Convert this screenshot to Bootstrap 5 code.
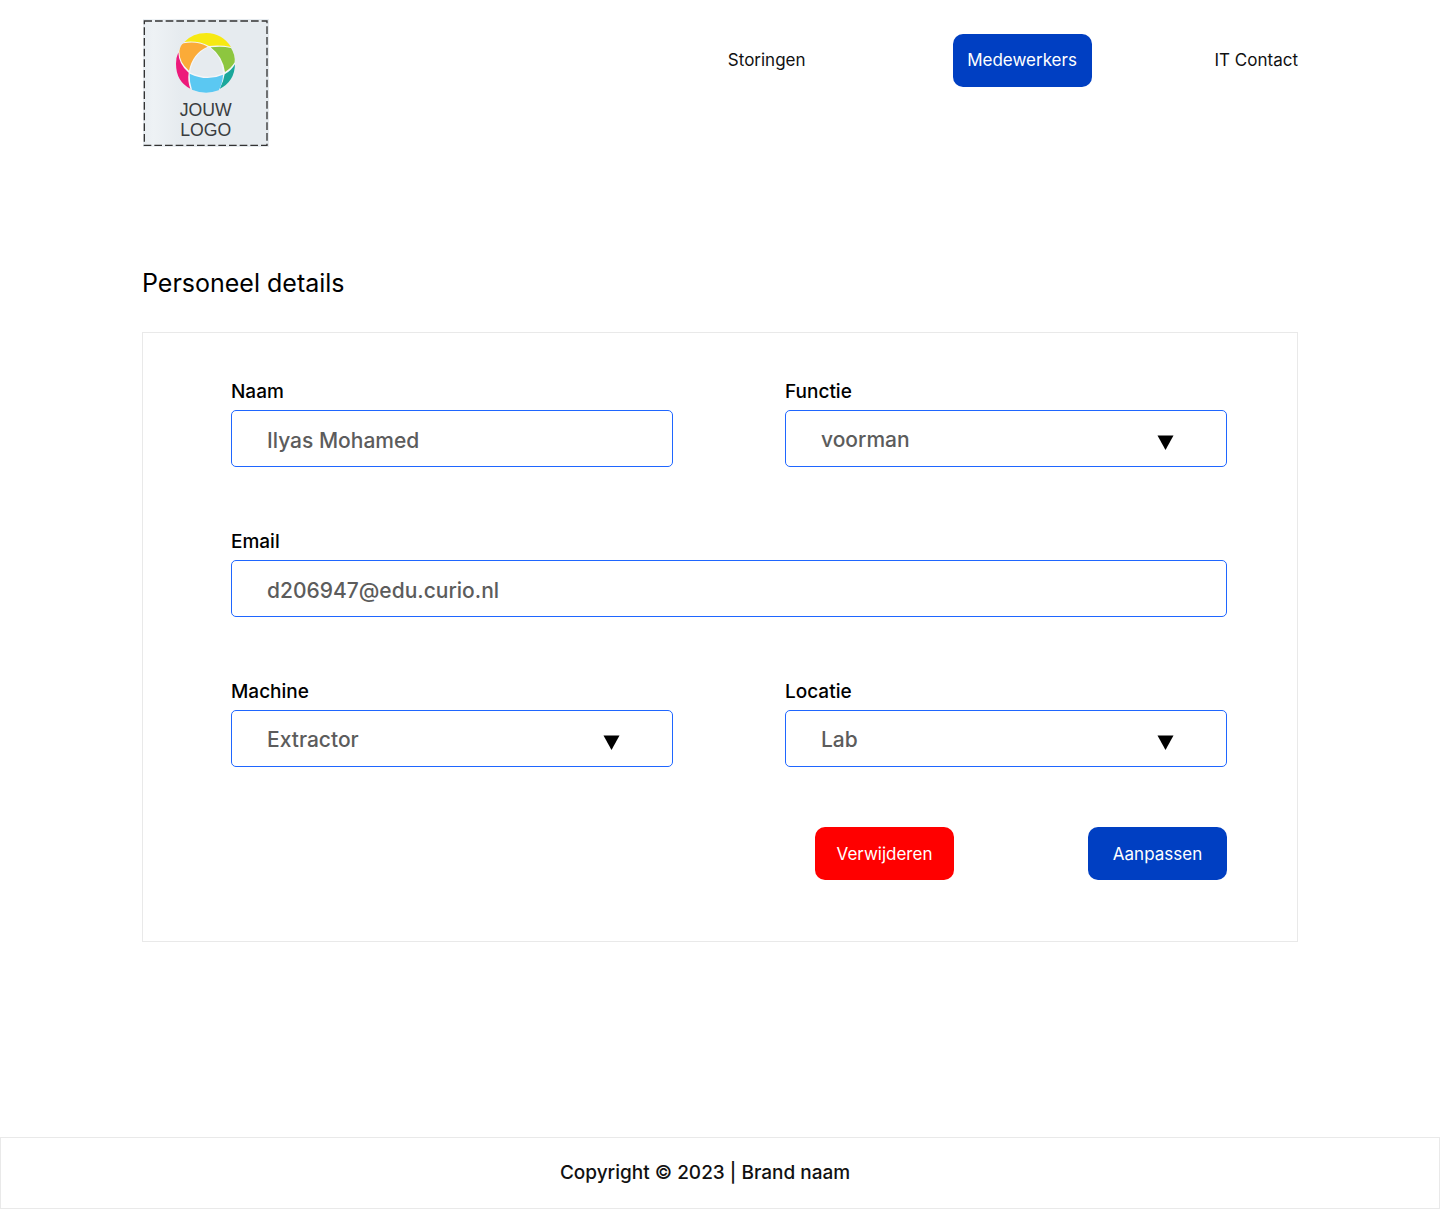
<!DOCTYPE html>
<html lang="nl">
<head>
<meta charset="utf-8">
<meta name="viewport" content="width=device-width, initial-scale=1">
<title>Personeel details</title>
<link href="https://cdn.jsdelivr.net/npm/bootstrap@5.3.0/dist/css/bootstrap.min.css" rel="stylesheet">
<style>
  :root { --brand: #003fc2; --field: #1f66ff; --line: #e9e9e9; }
  body { font-family: Inter, "Open Sans", sans-serif; color: #000; background: #fff; }
  .page-wrap { max-width: 1156px; width: 100%; margin-inline: auto; }
  .site-head { padding-top: 19px; }
  .site-nav { gap: 16px 123px; padding-top: 15px; }
  .site-nav .nav-link { color: #111; padding: 0; font-size: 17px; line-height: 52px; }
  .site-nav .nav-link.active { background: var(--brand); color: #fff; }
  .site-nav .nav-link.active, .btn-action { min-width: 139px; height: 53px; border-radius: 10px; text-align: center; }
  .page-title { font-size: 25px; line-height: 36px; margin: 118px 0 31px; font-weight: 400; }
  .details { border: 1px solid var(--line); padding: 45px 70px 61px 88px; }
  .details .row { --bs-gutter-x: 112px; --bs-gutter-y: 61px; }
  .form-label { font-size: 19px; font-weight: 500; line-height: 28px; margin-bottom: 4px; display: block; }
  .field, .field:focus { height: 57px; border: 1px solid var(--field); border-radius: 5px; padding: 3px 35px 0; font-size: 21px; font-weight: 500; color: #5c5c5c; background: #fff; }
  .arrow { right: 53px; top: 25px; pointer-events: none; }
  .actions { gap: 16px 134px; margin-top: 60px; }
  .btn-action { border: 0; color: #fff; font-size: 17px; padding-top: 8px; }
  .btn-remove { background: #f00; }
  .btn-save { background: var(--brand); }
  .site-foot { border: 1px solid var(--line); padding: 21px 30px 21px 0; font-size: 19px; line-height: 28px; font-weight: 500; color: #111; }
</style>
</head>
<body class="d-flex flex-column min-vh-100">
<header class="page-wrap site-head d-flex justify-content-between align-items-start">
  <a href="#" aria-label="Jouw logo">
    <svg class="d-block" width="127" height="128" viewBox="36 27 381 384">
      <defs>
        <linearGradient id="tile"><stop offset="0" stop-color="#e8edf1"/><stop offset=".08" stop-color="#eef2f5"/><stop offset=".3" stop-color="#e6ebef"/></linearGradient>
      </defs>
      <rect x="39" y="27" width="378" height="384" fill="url(#tile)"/>
      <rect x="43" y="33" width="368" height="373" fill="none" stroke="#333" stroke-width="4" stroke-dasharray="23 9"/>
      <g transform="translate(126 54)">
        <circle cx="101" cy="105" r="89" fill="#f4f6f8"/>
        <path d="M37 42Q62 15 103 15Q152 17 177 57Q145 50 111 54Q78 37 37 42Z" fill="#f7e912"/>
        <path d="M22 70Q25 50 35 46Q75 38 107 56Q62 75 51 128Q22 105 22 70Z" fill="#fbab38"/>
        <path d="M19 73Q20 110 50 134Q46 160 55 182Q12 160 12 107Q12 88 19 73Z" fill="#ed1a7b"/>
        <path d="M116 58Q150 53 177 60Q190 80 188 103Q178 120 159 132Q152 85 116 58Z" fill="#8dc63f"/>
        <path d="M189 109Q188 160 143 183Q155 160 158 139Q178 128 189 109Z" fill="#1aa79b"/>
        <path d="M53 137Q105 162 153 140Q152 165 140 187Q100 202 60 185Q52 160 53 137Z" fill="#5bc8f2"/>
        <path d="M110 57Q150 85 153 136Q105 158 54 133Q62 80 110 57Z" fill="#e6ebef"/>
      </g>
      <g font-family="Liberation Sans, Arial, sans-serif" font-size="53" fill="#3a3d40" text-anchor="middle">
        <text x="227" y="317">JOUW</text>
        <text x="227" y="377">LOGO</text>
      </g>
    </svg>
  </a>
  <nav class="nav nav-pills site-nav" aria-label="Hoofdmenu">
    <a class="nav-link me-4" href="#">Storingen</a>
    <a class="nav-link active" aria-current="page" href="#">Medewerkers</a>
    <a class="nav-link" href="#">IT Contact</a>
  </nav>
</header>

<main class="page-wrap">
  <h1 class="page-title">Personeel details</h1>
  <form class="details">
    <div class="row">
      <div class="col-md-6">
        <label class="form-label" for="naam">Naam</label>
        <input class="form-control field" id="naam" type="text" value="Ilyas Mohamed">
      </div>
      <div class="col-md-6">
        <label class="form-label" for="functie">Functie</label>
        <div class="position-relative">
          <select class="form-select field" id="functie"><option>voorman</option></select>
          <svg class="arrow position-absolute" width="17" height="15" viewBox="0 0 17 15" aria-hidden="true"><path d="M.5 .5H16.500L8.500 15Z"/></svg>
        </div>
      </div>
      <div class="col-12">
        <label class="form-label" for="email">Email</label>
        <input class="form-control field" id="email" type="email" value="d206947@edu.curio.nl">
      </div>
      <div class="col-md-6">
        <label class="form-label" for="machine">Machine</label>
        <div class="position-relative">
          <select class="form-select field" id="machine"><option>Extractor</option></select>
          <svg class="arrow position-absolute" width="17" height="15" viewBox="0 0 17 15" aria-hidden="true"><path d="M.5 .5H16.500L8.500 15Z"/></svg>
        </div>
      </div>
      <div class="col-md-6">
        <label class="form-label" for="locatie">Locatie</label>
        <div class="position-relative">
          <select class="form-select field" id="locatie"><option>Lab</option></select>
          <svg class="arrow position-absolute" width="17" height="15" viewBox="0 0 17 15" aria-hidden="true"><path d="M.5 .5H16.500L8.500 15Z"/></svg>
        </div>
      </div>
    </div>
    <div class="actions d-flex flex-wrap justify-content-end">
      <button class="btn btn-action btn-remove" type="button">Verwijderen</button>
      <button class="btn btn-action btn-save" type="submit">Aanpassen</button>
    </div>
  </form>
</main>

<footer class="site-foot text-center mt-auto">Copyright © 2023 | Brand naam</footer>
<script src="https://cdn.jsdelivr.net/npm/bootstrap@5.3.0/dist/js/bootstrap.bundle.min.js"></script>
</body>
</html>
